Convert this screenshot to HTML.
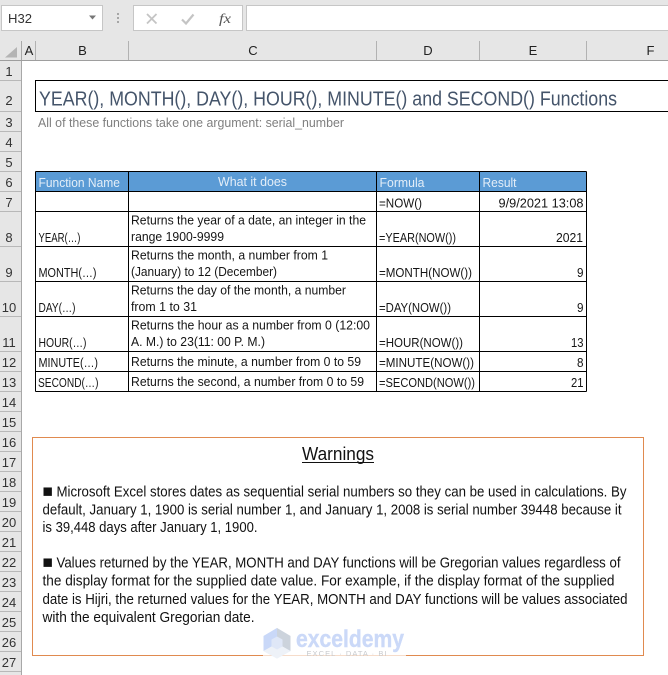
<!DOCTYPE html>
<html><head><meta charset="utf-8"><style>
html,body{margin:0;padding:0;background:#fff;width:668px;height:675px;overflow:hidden}
svg{display:block}
text{font-family:"Liberation Sans",sans-serif}
.c{font-size:13px;fill:#151515}
.h{font-size:13px;fill:#e4eef8}
.r{font-size:13px;fill:#333;text-anchor:middle}
.k{font-size:13px;fill:#222;text-anchor:middle}
.w{font-size:14.4px;fill:#111}
</style></head><body>
<svg width="668" height="675" viewBox="0 0 668 675" xmlns="http://www.w3.org/2000/svg">
<rect width="668" height="675" fill="#fff"/>
<!-- toolbar -->
<rect width="668" height="60" fill="#e6e6e6"/>
<rect x="1.5" y="5.5" width="101" height="25" fill="#fff" stroke="#c6c6c6"/>
<text x="8" y="23" font-size="13" fill="#333" textLength="24" lengthAdjust="spacingAndGlyphs">H32</text>
<path d="M89 15.500h7l-3.500 4z" fill="#777"/>
<g fill="#a6a6a6"><rect x="117" y="13" width="2" height="2"/><rect x="117" y="17" width="2" height="2"/><rect x="117" y="21" width="2" height="2"/></g>
<rect x="133.500" y="5.500" width="109" height="25" fill="#fff" stroke="#c6c6c6"/>
<path d="M147 14l9.500 9.500M156.500 14l-9.500 9.500" stroke="#c4c4c4" stroke-width="1.800" fill="none"/>
<path d="M182 19.500l4 4 7.500-9" stroke="#c4c4c4" stroke-width="2.200" fill="none"/>
<text x="219" y="23" font-size="14" font-style="italic" fill="#555" style="font-family:'Liberation Serif',serif" textLength="12" lengthAdjust="spacingAndGlyphs">fx</text>
<rect x="246.500" y="5.500" width="430" height="25" fill="#fff" stroke="#c6c6c6"/>
<!-- col headers -->
<rect x="0" y="60" width="21.500" height="615" fill="#e6e6e6"/>
<path d="M17 47v10.500h-12z" fill="#b4b4b4"/>
<path d="M21.500 41v634" stroke="#a8a8a8" stroke-width="1"/>
<path d="M0 60.500H668" stroke="#9e9e9e" stroke-width="1"/>
<path d="M35.500 41v19M128.500 41v19M376.500 41v19M479.500 41v19M586.500 41v19" stroke="#b2b2b2"/>
<g>
<text class="k" x="29" y="55">A</text><text class="k" x="82.500" y="55">B</text><text class="k" x="253" y="55">C</text><text class="k" x="428" y="55">D</text><text class="k" x="533" y="55">E</text><text class="k" x="650.500" y="55">F</text>
</g>
<!-- row lines -->
<path d="M0 80.500h21M0 111.500h21M0 131.500h21M0 151.500h21M0 171.500h21M0 191.500h21M0 211.500h21M0 246.500h21M0 281.500h21M0 316.500h21M0 351.500h21M0 371.500h21M0 391.500h21M0 411.500h21M0 431.500h21M0 451.500h21M0 471.500h21M0 491.500h21M0 511.500h21M0 531.500h21M0 551.500h21M0 571.500h21M0 591.500h21M0 611.500h21M0 631.500h21M0 651.500h21M0 671.500h21" stroke="#b8b8b8"/>
<g>
<text class="r" x="9" y="76">1</text><text class="r" x="9" y="105">2</text><text class="r" x="9" y="127">3</text><text class="r" x="9" y="147">4</text><text class="r" x="9" y="167">5</text><text class="r" x="9" y="187">6</text><text class="r" x="9" y="207">7</text><text class="r" x="9" y="242">8</text><text class="r" x="9" y="277">9</text><text class="r" x="9" y="312">10</text><text class="r" x="9" y="347">11</text><text class="r" x="9" y="367">12</text><text class="r" x="9" y="387">13</text><text class="r" x="9" y="407">14</text><text class="r" x="9" y="427">15</text><text class="r" x="9" y="447">16</text><text class="r" x="9" y="467">17</text><text class="r" x="9" y="487">18</text><text class="r" x="9" y="507">19</text><text class="r" x="9" y="527">20</text><text class="r" x="9" y="547">21</text><text class="r" x="9" y="567">22</text><text class="r" x="9" y="587">23</text><text class="r" x="9" y="607">24</text><text class="r" x="9" y="627">25</text><text class="r" x="9" y="647">26</text><text class="r" x="9" y="667">27</text>
</g>
<!-- title -->
<path d="M668 80.500H35.500V111.500H668" fill="none" stroke="#000"/>
<text x="39" y="105.500" font-size="20" fill="#44546a" textLength="578" lengthAdjust="spacingAndGlyphs">YEAR(), MONTH(), DAY(), HOUR(), MINUTE() and SECOND() Functions</text>
<text x="38" y="127" font-size="13" fill="#7f7f7f" textLength="306" lengthAdjust="spacingAndGlyphs">All of these functions take one argument: serial_number</text>
<!-- table -->
<rect x="35.500" y="171.500" width="551" height="20" fill="#5b9bd5"/>
<path d="M35.500 171.500H586.500M35.500 191.500H586.500M35.500 211.500H586.500M35.500 246.500H586.500M35.500 281.500H586.500M35.500 316.500H586.500M35.500 351.500H586.500M35.500 371.500H586.500M35.500 391.500H586.500M35.500 171.500V391.500M128.500 171.500V391.500M376.500 171.500V391.500M479.500 171.500V391.500M586.500 171.500V391.500" fill="none" stroke="#000"/>
<text class="h" x="38.500" y="187" textLength="81.500" lengthAdjust="spacingAndGlyphs">Function Name</text>
<text class="h" x="218" y="186" textLength="69" lengthAdjust="spacingAndGlyphs">What it does</text>
<text class="h" x="379.500" y="187" textLength="45" lengthAdjust="spacingAndGlyphs">Formula</text>
<text class="h" x="482.500" y="187" textLength="34" lengthAdjust="spacingAndGlyphs">Result</text>

<text class="c" x="379" y="207.500" textLength="43" lengthAdjust="spacingAndGlyphs">=NOW()</text>
<text class="c" x="498.500" y="207.500" textLength="85" lengthAdjust="spacingAndGlyphs">9/9/2021 13:08</text>

<text class="c" x="131" y="224.300" textLength="235" lengthAdjust="spacingAndGlyphs">Returns the year of a date, an integer in the</text>
<text class="c" x="131" y="241" textLength="93" lengthAdjust="spacingAndGlyphs">range 1900-9999</text>
<text class="c" x="38.500" y="242" textLength="42" lengthAdjust="spacingAndGlyphs">YEAR(…)</text>
<text class="c" x="379" y="242" textLength="77" lengthAdjust="spacingAndGlyphs">=YEAR(NOW())</text>
<text class="c" x="556" y="242" textLength="27" lengthAdjust="spacingAndGlyphs">2021</text>

<text class="c" x="131" y="259.300" textLength="197" lengthAdjust="spacingAndGlyphs">Returns the month, a number from 1</text>
<text class="c" x="131" y="276" textLength="146" lengthAdjust="spacingAndGlyphs">(January) to 12 (December)</text>
<text class="c" x="38.500" y="277" textLength="58" lengthAdjust="spacingAndGlyphs">MONTH(…)</text>
<text class="c" x="379" y="277" textLength="93" lengthAdjust="spacingAndGlyphs">=MONTH(NOW())</text>
<text class="c" x="577" y="277" textLength="6.500" lengthAdjust="spacingAndGlyphs">9</text>

<text class="c" x="131" y="294.300" textLength="215" lengthAdjust="spacingAndGlyphs">Returns the day of the month, a number</text>
<text class="c" x="131" y="311" textLength="66" lengthAdjust="spacingAndGlyphs">from 1 to 31</text>
<text class="c" x="38.500" y="312" textLength="37" lengthAdjust="spacingAndGlyphs">DAY(…)</text>
<text class="c" x="379" y="312" textLength="72" lengthAdjust="spacingAndGlyphs">=DAY(NOW())</text>
<text class="c" x="577" y="312" textLength="6.500" lengthAdjust="spacingAndGlyphs">9</text>

<text class="c" x="131" y="329.500" textLength="239" lengthAdjust="spacingAndGlyphs">Returns the hour as a number from 0 (12:00</text>
<text class="c" x="131" y="346" textLength="134" lengthAdjust="spacingAndGlyphs">A. M.) to 23(11: 00 P. M.)</text>
<text class="c" x="38.500" y="347" textLength="48" lengthAdjust="spacingAndGlyphs">HOUR(…)</text>
<text class="c" x="379" y="347" textLength="84" lengthAdjust="spacingAndGlyphs">=HOUR(NOW())</text>
<text class="c" x="571" y="347" textLength="12.500" lengthAdjust="spacingAndGlyphs">13</text>

<text class="c" x="131" y="366" textLength="230" lengthAdjust="spacingAndGlyphs">Returns the minute, a number from 0 to 59</text>
<text class="c" x="38.500" y="367" textLength="59.500" lengthAdjust="spacingAndGlyphs">MINUTE(…)</text>
<text class="c" x="379" y="367" textLength="95" lengthAdjust="spacingAndGlyphs">=MINUTE(NOW())</text>
<text class="c" x="577" y="367" textLength="6.500" lengthAdjust="spacingAndGlyphs">8</text>

<text class="c" x="131" y="386" textLength="233" lengthAdjust="spacingAndGlyphs">Returns the second, a number from 0 to 59</text>
<text class="c" x="38" y="387" textLength="60.500" lengthAdjust="spacingAndGlyphs">SECOND(…)</text>
<text class="c" x="379" y="387" textLength="96" lengthAdjust="spacingAndGlyphs">=SECOND(NOW())</text>
<text class="c" x="571" y="387" textLength="12.500" lengthAdjust="spacingAndGlyphs">21</text>

<!-- warnings box -->
<rect x="32.500" y="437.500" width="611" height="218" fill="#fff" stroke="#e08a4f"/>
<text x="302" y="460" font-size="18" fill="#111" textLength="72" lengthAdjust="spacingAndGlyphs">Warnings</text>
<rect x="302" y="462" width="72" height="1" fill="#111"/>

<text x="42.500" y="494.700" font-size="11" fill="#111" style="font-family:'DejaVu Sans',sans-serif">■</text>
<text class="w" x="56.500" y="496.700" textLength="570" lengthAdjust="spacingAndGlyphs">Microsoft Excel stores dates as sequential serial numbers so they can be used in calculations. By</text>
<text class="w" x="42.500" y="514.500" textLength="579" lengthAdjust="spacingAndGlyphs">default, January 1, 1900 is serial number 1, and January 1, 2008 is serial number 39448 because it</text>
<text class="w" x="42.500" y="532" textLength="215" lengthAdjust="spacingAndGlyphs">is 39,448 days after January 1, 1900.</text>

<text x="42.500" y="565.500" font-size="11" fill="#111" style="font-family:'DejaVu Sans',sans-serif">■</text>
<text class="w" x="56.500" y="567.500" textLength="564" lengthAdjust="spacingAndGlyphs">Values returned by the YEAR, MONTH and DAY functions will be Gregorian values regardless of</text>
<text class="w" x="42.500" y="585.600" textLength="572" lengthAdjust="spacingAndGlyphs">the display format for the supplied date value. For example, if the display format of the supplied</text>
<text class="w" x="42.500" y="604" textLength="585" lengthAdjust="spacingAndGlyphs">date is Hijri, the returned values for the YEAR, MONTH and DAY functions will be values associated</text>
<text class="w" x="42.500" y="622" textLength="212" lengthAdjust="spacingAndGlyphs">with the equivalent Gregorian date.</text>

<!-- watermark -->
<rect x="263" y="650" width="143" height="10" fill="#fff" fill-opacity=".7"/>
<path d="M277 628l13.500 8v15l-13.500 7.500-13.500-7.500v-15z" fill="#dfe7f7"/>
<path d="M277 628l13.500 8v15l-8-4.500v-7l-5.500-3z" fill="#ccd3dc"/>
<path d="M263.500 636l13.500-8v8.500l-5.500 3v7l-8 4.500z" fill="#c9d8f8"/>
<path d="M271.500 646.500l5.500 3 5.500-3 8 4.500-13.500 7.500-13.500-7.500z" fill="#eef2f8"/>
<text x="296" y="647" font-size="24" font-weight="bold" fill="#cbd9f8" stroke="#cbd9f8" stroke-width=".4" textLength="108" lengthAdjust="spacingAndGlyphs">exceldemy</text>
<text x="306.500" y="656" font-size="7.500" fill="#c8cacd" textLength="80" lengthAdjust="spacing">EXCEL · DATA · BI</text>
</svg>
</body></html>
